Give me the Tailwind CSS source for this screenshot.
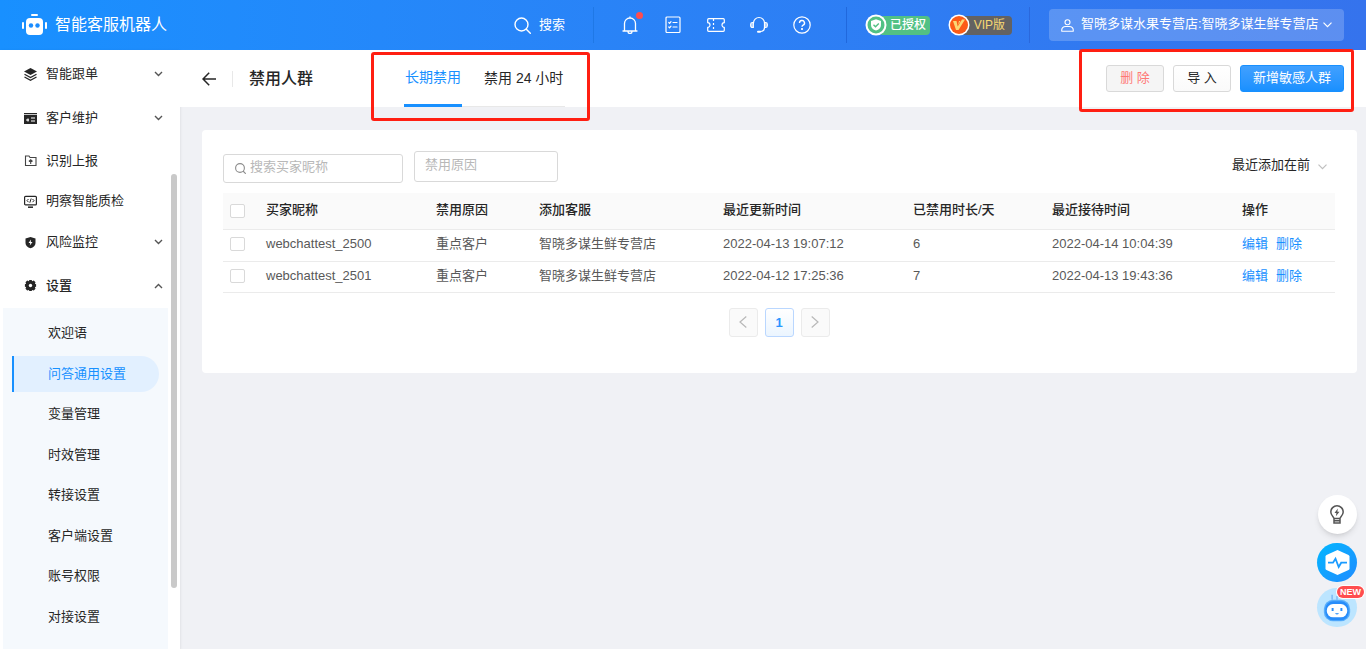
<!DOCTYPE html>
<html lang="zh-CN">
<head>
<meta charset="utf-8">
<meta name="viewport" content="width=device-width, initial-scale=1">
<title>智能客服机器人</title>
<script src="https://cdn.jsdelivr.net/npm/@tailwindcss/browser@4"></script>
</head>
<body class="relative flex h-screen flex-col overflow-hidden bg-[#f0f1f5] font-['Liberation_Sans','Noto_Sans_CJK_SC',sans-serif] text-[13px] leading-5 text-[#262626]">

<header class="flex h-[50px] shrink-0 items-center bg-linear-to-r from-[#1890ff] to-[#3573ed] pr-[22px] pl-[22px] text-white">
  <a href="#" class="flex items-center gap-2 text-[16px]">
    <svg class="h-[22px] w-[25px]" viewBox="0 0 25 22" fill="#fff"><rect x="9" y="0" width="7" height="2" rx="1"/><path d="M8 4h9a4 4 0 0 1 4 4v9a4 4 0 0 1-4 4H8a4 4 0 0 1-4-4V8a4 4 0 0 1 4-4z"/><rect x="0" y="8" width="2" height="7" rx="1"/><rect x="23" y="8" width="2" height="7" rx="1"/><circle cx="9" cy="11.500" r="2.200" fill="#1b8dff"/><circle cx="15.500" cy="11.500" r="2.200" fill="#1b8dff"/></svg>
    <span>智能客服机器人</span>
  </a>
  <button type="button" class="ml-auto flex items-center gap-2">
    <svg class="size-[17px]" viewBox="0 0 17 17" fill="none" stroke="#fff" stroke-width="1.400" stroke-linecap="round"><circle cx="7.500" cy="7.500" r="6.500"/><path d="M12.300 12.300l4 4"/></svg>
    <span>搜索</span>
  </button>
  <span class="ml-7 h-9 w-px bg-[#1f78e6]"></span>
  <nav class="ml-[27px] flex items-center gap-[25px]">
    <button type="button" aria-label="通知" class="relative">
      <svg class="size-[18px]" viewBox="0 0 18 18" fill="none" stroke="#fff" stroke-width="1.300" stroke-linecap="round" stroke-linejoin="round"><path d="M2 15h14M3.500 15V7.500a5.500 5.500 0 0 1 11 0V15M9 2V1M7 15.500a2 2 0 0 0 4 0"/></svg>
      <span class="absolute -top-1 -right-1 size-[7px] rounded-full bg-[#ff4d4f]"></span>
    </button>
    <button type="button" aria-label="任务">
      <svg class="size-[18px]" viewBox="0 0 18 18" fill="none" stroke="#fff" stroke-width="1.200" stroke-linecap="round" stroke-linejoin="round"><rect x="2" y="1" width="14" height="15.500" rx="1"/><path d="M9 6.500h4M9 11h4M4.800 6.500l.8.800 1.400-1.600M4.800 11l.8.800 1.400-1.600"/></svg>
    </button>
    <button type="button" aria-label="卡券">
      <svg class="size-[18px]" viewBox="0 0 18 18" fill="none" stroke="#fff" stroke-width="1.200" stroke-linejoin="round"><path d="M1.700 2.700h14.600q1 0 1 1v3a2.300 2.300 0 0 0 0 4.600v3q0 1-1 1H1.700q-1 0-1-1v-3a2.300 2.300 0 0 0 0-4.600v-3q0-1 1-1z"/><path d="M6.500 3v12" stroke-dasharray="2 2"/></svg>
    </button>
    <button type="button" aria-label="客服">
      <svg class="size-[18px]" viewBox="0 0 18 18" fill="none" stroke="#fff" stroke-width="1.200" stroke-linecap="round"><path d="M3.500 7a5.500 5.500 0 0 1 11 0v4.500c0 2.500-2 4-4.500 4"/><path d="M3.300 6.500v5H2.500A1.800 1.800 0 0 1 .7 9.700V8.300a1.800 1.800 0 0 1 1.800-1.800zM14.700 6.500v5h.8a1.800 1.800 0 0 0 1.800-1.800V8.300a1.800 1.800 0 0 0-1.800-1.800z" fill="#fff" fill-opacity=".5"/><path d="M8 15.700h2" stroke-width="2"/></svg>
    </button>
    <button type="button" aria-label="帮助">
      <svg class="size-[18px]" viewBox="0 0 18 18" fill="none" stroke="#fff" stroke-width="1.200"><circle cx="9" cy="9" r="8.200"/><path d="M6.500 7a2.500 2.500 0 1 1 3.600 2.200c-.7.400-1.100.700-1.100 1.600" stroke-width="1.400"/><circle cx="9" cy="13" r=".5" fill="#fff"/></svg>
    </button>
  </nav>
  <span class="ml-[35px] h-9 w-px bg-[#2068dd]"></span>
  <span class="ml-[18px] flex h-[22px] w-[65px] items-center text-[12px] font-medium">
    <svg class="z-10 size-[22px] shrink-0" viewBox="0 0 22 22"><circle cx="11" cy="11" r="10.500" fill="#fff"/><circle cx="11" cy="11" r="8.500" fill="#52c184"/><path d="M11 5.200l5 1.700v4c0 2.700-2 4.700-5 5.700-3-1-5-3-5-5.700v-4z" fill="#fff"/><path d="M8.500 10.700l2 2 3.300-3.300" fill="none" stroke="#52c184" stroke-width="1.400"/></svg>
    <span class="-ml-2 flex h-[19px] flex-1 items-center justify-end rounded-sm bg-[#52c184] pr-1">已授权</span>
  </span>
  <span class="ml-[18px] flex h-[22px] w-[64px] items-center text-[12px] text-[#f7d873]">
    <svg class="z-10 size-[22px] shrink-0" viewBox="0 0 22 22"><circle cx="11" cy="11" r="10.500" fill="#fff"/><circle cx="11" cy="11" r="9" fill="#fc5b17"/><path d="M5 7h3.500l1.200 5.500L14 5.500h3L10.500 16H8z" fill="#fbd774"/><path d="M11 7h1.500l-2.500 4z" fill="#fbd774"/></svg>
    <span class="-ml-2 flex h-[19px] flex-1 items-center justify-end rounded-sm bg-[#636262] pr-[7px]">VIP版</span>
  </span>
  <span class="ml-[17px] h-9 w-px bg-[#2a68dd]"></span>
  <button type="button" class="ml-[19px] flex h-8 w-[295px] items-center rounded-sm bg-white/20 px-3 whitespace-nowrap">
    <svg class="size-[13px] shrink-0" viewBox="0 0 13 13" fill="none" stroke="#fff" stroke-width="1.100"><circle cx="6.500" cy="3.300" r="2.500"/><path d="M.8 12.200c-.5-3 1.500-4.700 4-4.700h3.400c2.500 0 4.500 1.700 4 4.700z"/></svg>
    <span class="ml-[7px] pb-[3px]">智晓多谋水果专营店:智晓多谋生鲜专营店</span>
    <svg class="ml-auto h-[6px] w-[9px] shrink-0" viewBox="0 0 9 6" fill="none" stroke="#fff" stroke-width="1.200"><path d="M.5.700l4 4 4-4"/></svg>
  </button>
</header>

<div class="flex min-h-0 flex-1">
  <aside class="flex w-[180px] shrink-0 bg-white shadow-sm">
    <nav class="min-w-0 flex-1 overflow-hidden pt-[2px] pl-[3px]">
      <button type="button" class="flex h-11 w-full items-center pr-[5px] pl-[21px]">
        <svg class="size-[13px]" viewBox="0 0 13 13"><path d="M6.500 0L13 3.500 6.500 7 0 3.500z" fill="#262626"/><path d="M.5 6.300l6 3.200 6-3.200M.5 9l6 3.200L12.500 9" fill="none" stroke="#262626" stroke-width="1.300"/></svg>
        <span class="ml-[9px]">智能跟单</span>
        <svg class="ml-auto h-[6px] w-[9px]" viewBox="0 0 9 6" fill="none" stroke="#555" stroke-width="1.400"><path d="M1 1l3.500 3.500L8 1"/></svg>
      </button>
      <button type="button" class="flex h-11 w-full items-center pr-[5px] pl-[21px]">
        <svg class="size-[13px]" viewBox="0 0 13 13"><path d="M0 1h13v1.200H0zM0 3h13v9H0z" fill="#262626"/><path d="M7 6h4M7 9h4M2 8h3M4 6.500v3" stroke="#fff" stroke-width="1.200"/></svg>
        <span class="ml-[9px]">客户维护</span>
        <svg class="ml-auto h-[6px] w-[9px]" viewBox="0 0 9 6" fill="none" stroke="#555" stroke-width="1.400"><path d="M1 1l3.500 3.500L8 1"/></svg>
      </button>
      <a href="#" class="flex h-[41px] items-center pl-[21px]">
        <svg class="size-[13px]" viewBox="0 0 13 13" fill="none" stroke="#444" stroke-width="1.100"><path d="M1.500 2h3.500l1 1.500h6V11.500H1.500z"/><path d="M6.700 10V5.800M4.900 7.500l1.800-1.800 1.800 1.800"/></svg>
        <span class="ml-[9px]">识别上报</span>
      </a>
      <a href="#" class="flex h-10 items-center pl-[21px]">
        <svg class="size-[13px]" viewBox="0 0 13 13" fill="none" stroke="#262626" stroke-width="1.200"><rect x=".6" y="1.300" width="11.800" height="8.600" rx="1"/><path d="M4 12.200h5" stroke-width="1.500"/><path d="M4.500 4L3 5.600l1.500 1.600M8.500 4L10 5.600 8.500 7.200M7.200 3.500L5.800 7.700" stroke-width="1"/></svg>
        <span class="ml-[9px]">明察智能质检</span>
      </a>
      <button type="button" class="flex h-[42px] w-full items-center pr-[5px] pl-[21px]">
        <svg class="size-[13px]" viewBox="0 0 13 13"><path d="M6.500 1l5 1.500V7c0 2.500-2 4.300-5 5.300-3-1-5-2.800-5-5.300V2.500z" fill="#262626"/><path d="M7 3.500L4.500 7h1.700l-.4 2.500L8.500 6H6.800z" fill="#fff"/></svg>
        <span class="ml-[9px]">风险监控</span>
        <svg class="ml-auto h-[6px] w-[9px]" viewBox="0 0 9 6" fill="none" stroke="#555" stroke-width="1.400"><path d="M1 1l3.500 3.500L8 1"/></svg>
      </button>
      <button type="button" class="flex h-[45px] w-full items-center pr-[5px] pl-[21px] font-medium">
        <svg class="size-[13px]" viewBox="0 0 13 13"><path d="M5.300 1h2.400l.4 1.200 1.700-.7 1.700 1.700-.6 1.600 1.200.5v2.400l-1.200.4.600 1.700-1.700 1.700-1.700-.6-.4 1.200H5.300l-.4-1.200-1.700.6-1.700-1.700.6-1.700L.9 7.700V5.300l1.200-.5-.6-1.600 1.700-1.700 1.700.7z" fill="#262626"/><circle cx="6.500" cy="6.500" r="1.700" fill="#fff"/></svg>
        <span class="ml-[9px]">设置</span>
        <svg class="ml-auto h-[6px] w-[9px]" viewBox="0 0 9 6" fill="none" stroke="#555" stroke-width="1.400"><path d="M1 5l3.500-3.500L8 5"/></svg>
      </button>
      <div class="h-[360px] w-[165px] bg-[#f5f9fd] pt-[5px]">
        <div class="grid h-[324px] grid-rows-8 items-center">
          <a href="#" class="pl-[45px]">欢迎语</a>
          <a href="#" class="mr-[9px] ml-[9px] flex h-9 items-center rounded-r-full border-l-2 border-[#1890ff] bg-[#e2f0ff] pl-[34px] text-[#1890ff]">问答通用设置</a>
          <a href="#" class="pl-[45px]">变量管理</a>
          <a href="#" class="pl-[45px]">时效管理</a>
          <a href="#" class="pl-[45px]">转接设置</a>
          <a href="#" class="pl-[45px]">客户端设置</a>
          <a href="#" class="pl-[45px]">账号权限</a>
          <a href="#" class="pl-[45px]">对接设置</a>
        </div>
      </div>
    </nav>
    <div class="w-3 pt-[124px] pl-[3px]"><div class="h-[414px] w-[6px] rounded-full bg-[#c9c9c9]"></div></div>
  </aside>

  <div class="flex min-w-0 flex-1 flex-col">
    <div class="flex h-[57px] shrink-0 items-center bg-white pr-[22px] pl-[22px]">
      <button type="button" aria-label="返回">
        <svg class="h-[14px] w-[14px]" viewBox="0 0 14 14" fill="none" stroke="#262626" stroke-width="1.500"><path d="M14 7H1.200M7.200.7L1 7l6.200 6.300"/></svg>
      </button>
      <span class="ml-4 h-4 w-px bg-[#e8e8e8]"></span>
      <h1 class="ml-4 text-[16px] font-medium">禁用人群</h1>
      <div role="tablist" class="ml-[91px] flex self-stretch text-[14px]">
        <button type="button" role="tab" aria-selected="true" class="border-b-3 border-[#1890ff] px-px text-[#1890ff]">长期禁用</button>
        <button type="button" role="tab" aria-selected="false" class="border-b border-[#e8e8e8] pr-[2px] pl-[22px]">禁用 24 小时</button>
      </div>
      <div class="ml-auto flex gap-[9px] text-[13px]">
        <button type="button" class="h-[27px] w-[58px] rounded-[3px] border border-[#d9d9d9] bg-[#f5f5f5] pb-[2px] leading-none text-[#ff7875]">删 除</button>
        <button type="button" class="h-[27px] w-[58px] rounded-[3px] border border-[#d9d9d9] bg-linear-to-b from-white to-[#fafafa] pb-[2px] leading-none">导 入</button>
        <button type="button" class="h-[27px] w-[104px] rounded-[3px] border border-[#1890ff] bg-linear-to-b from-[#40a0ff] to-[#1890ff] pb-[2px] leading-none text-white">新增敏感人群</button>
      </div>
    </div>

    <main class="mt-[23px] mr-[9px] ml-[22px] rounded-sm bg-white pt-[21px] pr-[22px] pb-9 pl-[21px]">
      <div class="flex h-[42px] items-start">
        <label class="mt-[3px] flex h-[29px] w-[180px] items-center rounded-[3px] border border-[#d9d9d9] pl-[11px]">
          <svg class="size-[11px] shrink-0" viewBox="0 0 11 11" fill="none" stroke="#8c8c8c" stroke-width="1.100"><circle cx="5" cy="5" r="4.400"/><path d="M8 8l2.800 2.800"/></svg>
          <input type="text" aria-label="搜索买家昵称" placeholder="搜索买家昵称" class="ml-1 w-full min-w-0 pb-[3px] outline-none placeholder:text-[#b8b8b8]">
        </label>
        <select aria-label="禁用原因" class="ml-[11px] h-[31px] w-[144px] appearance-none rounded-[3px] border border-[#d9d9d9] bg-white pb-1 pl-[10px] text-[#b8b8b8] outline-none"><option>禁用原因</option></select>
        <label class="mt-1 mr-2 ml-auto flex items-center gap-[7px]">
          <select aria-label="排序" class="appearance-none bg-white outline-none"><option>最近添加在前</option></select>
          <svg class="mt-1 h-[6px] w-[9px]" viewBox="0 0 9 6" fill="none" stroke="#bfbfbf" stroke-width="1.200"><path d="M.5.700l4 4 4-4"/></svg>
        </label>
      </div>
      <table class="w-full table-fixed text-left text-[#595959]">
        <colgroup><col class="w-[43px]"><col class="w-[170px]"><col class="w-[103px]"><col class="w-[184px]"><col class="w-[190px]"><col class="w-[139px]"><col class="w-[190px]"><col class="w-[93px]"></colgroup>
        <thead>
          <tr class="h-9 border-b border-[#ebebeb] bg-[#fafafa] text-[#262626] *:font-medium">
            <th class="pl-[7px]"><input type="checkbox" aria-label="全选" class="block h-[14px] w-[15px] appearance-none rounded-xs border border-[#d9d9d9] bg-white"></th>
            <th class="pb-[2px]">买家昵称</th><th class="pb-[2px]">禁用原因</th><th class="pb-[2px]">添加客服</th><th class="pb-[2px]">最近更新时间</th><th class="pb-[2px]">已禁用时长/天</th><th class="pb-[2px]">最近接待时间</th><th class="pb-[2px]">操作</th>
          </tr>
        </thead>
        <tbody>
          <tr class="h-8 border-b border-[#ebebeb]">
            <td class="pl-[7px]"><input type="checkbox" aria-label="选择 webchattest_2500" class="mb-[2px] block h-[14px] w-[15px] appearance-none rounded-xs border border-[#d9d9d9] bg-white"></td>
            <td class="pb-[2px]">webchattest_2500</td><td class="pb-[2px]">重点客户</td><td class="pb-[2px]">智晓多谋生鲜专营店</td><td class="pb-[2px]">2022-04-13 19:07:12</td><td class="pb-[2px]">6</td><td class="pb-[2px]">2022-04-14 10:04:39</td>
            <td class="pb-[2px] text-[#1890ff]"><a href="#">编辑</a><a href="#" class="ml-2">删除</a></td>
          </tr>
          <tr class="h-[31px] border-b border-[#ebebeb]">
            <td class="pl-[7px]"><input type="checkbox" aria-label="选择 webchattest_2501" class="mb-[2px] block h-[14px] w-[15px] appearance-none rounded-xs border border-[#d9d9d9] bg-white"></td>
            <td class="pb-[2px]">webchattest_2501</td><td class="pb-[2px]">重点客户</td><td class="pb-[2px]">智晓多谋生鲜专营店</td><td class="pb-[2px]">2022-04-12 17:25:36</td><td class="pb-[2px]">7</td><td class="pb-[2px]">2022-04-13 19:43:36</td>
            <td class="pb-[2px] text-[#1890ff]"><a href="#">编辑</a><a href="#" class="ml-2">删除</a></td>
          </tr>
        </tbody>
      </table>
      <nav aria-label="分页" class="mt-[15px] flex justify-center gap-[7px]">
        <button type="button" aria-label="上一页" disabled class="flex size-[29px] items-center justify-center rounded-[3px] border border-[#ebebeb] bg-[#fafafa]"><svg class="h-[12px] w-[8px]" viewBox="0 0 8 12" fill="none" stroke="#b8b8b8" stroke-width="1.200"><path d="M7.300.500L1 6l6.300 5.500"/></svg></button>
        <button type="button" aria-current="page" class="size-[29px] rounded-[3px] border border-[#bad7ff] bg-linear-to-b from-white to-[#ebf5ff] pt-[2px] font-bold text-[#2b95ff]">1</button>
        <button type="button" aria-label="下一页" disabled class="flex size-[29px] items-center justify-center rounded-[3px] border border-[#ebebeb] bg-[#fafafa]"><svg class="h-[12px] w-[8px]" viewBox="0 0 8 12" fill="none" stroke="#b8b8b8" stroke-width="1.200"><path d="M.7.500L7 6 .7 11.500"/></svg></button>
      </nav>
    </main>
  </div>
</div>

<!-- Floating shortcuts -->
<div class="absolute right-[9px] bottom-[22px] flex flex-col items-center gap-[6px]">
  <button type="button" aria-label="建议" class="mb-[3px] flex size-[39px] items-center justify-center rounded-full bg-white shadow-md">
    <svg class="h-[19px] w-[14px]" viewBox="0 0 14 19" fill="none" stroke="#555" stroke-width="1.500"><path d="M4 13.500C4 11.800.8 10.500.8 7a6.200 6.200 0 0 1 12.400 0c0 3.500-3.200 4.800-3.200 6.500zM4 13.500V18h6v-4.500M4 15.800h6"/><path d="M7.800 3.500L4.500 8h1.900l-.5 3.200L9.500 6.700H7.400z" fill="#555" stroke="none"/></svg>
  </button>
  <button type="button" aria-label="诊断" class="flex h-[39px] w-10 items-center justify-center rounded-full bg-linear-to-br from-[#00b7ff] to-[#1f8bff]">
    <svg class="h-[25px] w-[25px]" viewBox="0 0 25 25"><path d="M12.500 0l11 5q1 .5 1 1.500v12q0 1-1 1.500l-11 5-11-5q-1-.5-1-1.500v-12q0-1 1-1.500z" fill="#fff"/><path d="M3 12.700h5l2.500-4 3.200 8.300 2.500-4.300H22" fill="none" stroke="#1a9bff" stroke-width="1.800"/></svg>
  </button>
  <button type="button" aria-label="智能助手" class="relative flex h-[39px] w-10 items-center justify-center rounded-full bg-[#bce5ff]">
    <svg class="h-[39px] w-10" viewBox="0 0 40 40"><path d="M15 7v5M20 12V9l2-1" stroke="#7dbdf5" stroke-width="1.600" fill="none"/><rect x="6.500" y="12" width="27" height="22" rx="9.500" fill="#58aefb"/><rect x="8" y="13.500" width="24" height="19.500" rx="8" fill="#288dfa"/><rect x="9.500" y="16.500" width="21" height="13.500" rx="6.500" fill="#fff"/><path d="M15.500 20.500v3M24.500 20.500v3" stroke="#288dfa" stroke-width="2"/><path d="M18.500 26q1.500 1.200 3 0" stroke="#288dfa" stroke-width="1.200" fill="none"/></svg>
    <span class="absolute -top-[2px] left-5 rounded-full bg-[#ff4d4f] px-[3px] text-[9px] leading-[12px] font-black text-white ring-1 ring-white">NEW</span>
  </button>
</div>

<!-- Callout frames around the tabs and the action buttons -->
<div class="pointer-events-none absolute top-[52px] left-[371px] h-[69px] w-[219px] rounded-[3px] border-3 border-[#ff1f12]"></div>
<div class="pointer-events-none absolute top-[49px] right-[12px] h-[63px] w-[275px] rounded-[3px] border-3 border-[#ff1f12]"></div>
</body>
</html>
